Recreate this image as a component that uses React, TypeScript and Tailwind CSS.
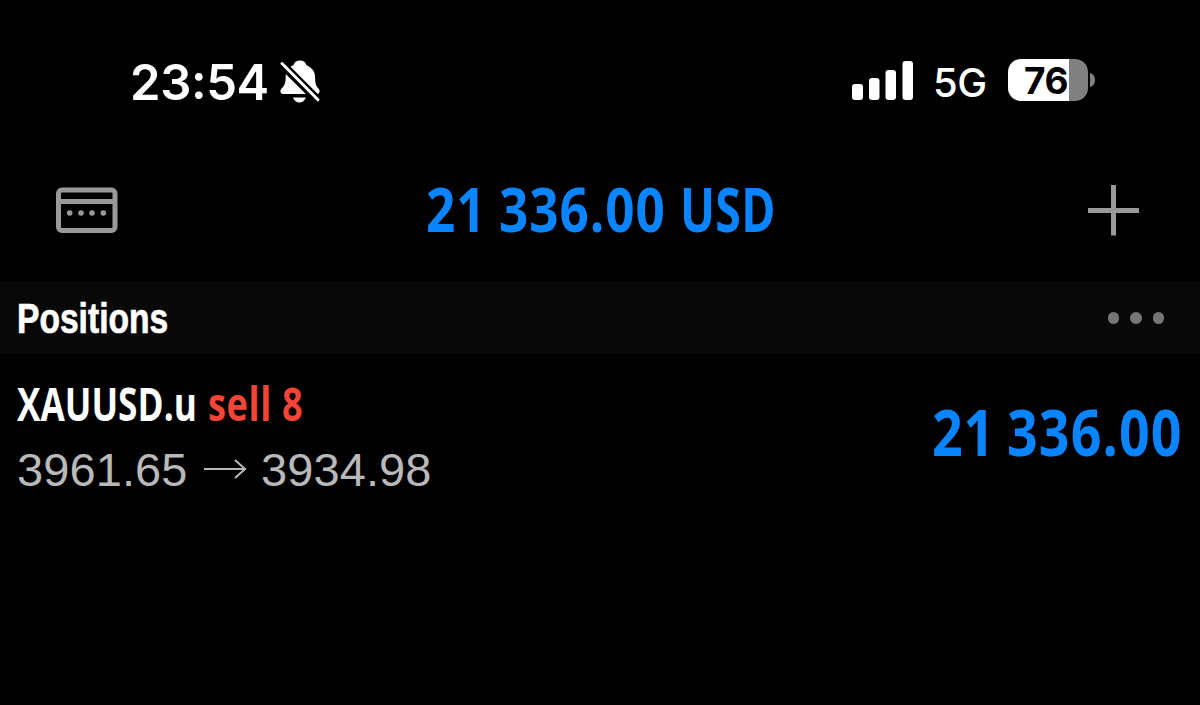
import React from 'react';
import clsx from 'clsx';

type CondensedProps = {
  children: React.ReactNode;
  box: string;
  stretch: string;
};

// Narrow display text: the box keeps the final width, the inner span is squeezed into it
function Condensed({ children, box, stretch }: CondensedProps) {
  return (
    <span className={clsx('block shrink-0', box)}>
      <span className={clsx('inline-block origin-left whitespace-pre', stretch)}>{children}</span>
    </span>
  );
}

function BellOff() {
  return (
    <svg className="ml-[11px] w-[42px] h-[44px]" viewBox="0 0 42 44" fill="none">
      <path
        d="M21 1.500c3.400 0 5.800 2 6.500 4.800 5 2 8.600 6.200 8.600 11.700 0 7 1.200 9 3.500 11.800 1.800 2.200 1 5.200-1.700 5.200H4.200c-2.900 0-3.600-3.100-1.800-5.200 2.700-3 4.300-5 4.300-11.800 0-5.500 2.300-9.700 7.700-11.700C15.100 3.500 17.500 1.500 21 1.500Z"
        fill="#fff"
      />
      <path d="M14 38.500h12.800c-1 3-3.500 5-6.400 5s-5.400-2-6.400-5Z" fill="#fff" />
      <path d="M-1 1.200 41 43.200" stroke="#000" strokeWidth="8.500" />
      <path d="M3 4.500 39 40.700" stroke="#fff" strokeWidth="3" strokeLinecap="round" />
    </svg>
  );
}

function Signal() {
  return (
    <svg className="w-[62px] h-[39px]" viewBox="0 0 62 39" fill="#fff">
      <rect x="0" y="23" width="11" height="16" rx="3" />
      <rect x="17" y="17" width="10.500" height="22" rx="3" />
      <rect x="33.500" y="9" width="10.500" height="30" rx="3" />
      <rect x="50.500" y="0" width="10.500" height="39" rx="3" />
    </svg>
  );
}

function Battery() {
  return (
    <div className="flex items-center gap-[2px] ml-[20px]">
      <div className="w-[80px] h-[42px] rounded-[13px] bg-linear-to-r from-white from-[61px] to-[#808080] to-[61px] pl-[16px] text-black text-[37px] leading-[43px] font-bold tracking-[-0.5px]">
        76
      </div>
      <svg className="w-[5px] h-[14px]" viewBox="0 0 5 14">
        <path d="M0 0c3.500 1 5 4 5 7s-1.500 6-5 7Z" fill="#808080" />
      </svg>
    </div>
  );
}

function StatusBar() {
  return (
    <div className="h-[160px] pt-[59px] pl-[130px] pr-[105px] flex items-start justify-between font-['Inter',sans-serif] text-white">
      <div className="flex items-start">
        <div className="w-[138px] pt-[1px] text-[49px] leading-[46px] font-semibold tracking-[-0.4px] whitespace-nowrap">
          23<span className="relative -top-[1px]">:</span>54
        </div>
        <BellOff />
      </div>
      <div className="flex items-center h-[42px]">
        <Signal />
        <div className="ml-[19px] w-[55px] pt-[5px] text-[40px] leading-[42px] font-medium tracking-[-0.5px]">5G</div>
        <Battery />
      </div>
    </div>
  );
}

function NavBar() {
  return (
    <div className="h-[121px] pb-[21px] pl-[56px] pr-[61px] flex items-center justify-between">
      <svg className="w-[62px] h-[46px]" viewBox="0 0 62 46">
        <rect x="2.500" y="3" width="56.500" height="40.500" rx="3.500" fill="none" stroke="#999" strokeWidth="5" />
        <path d="M3 14.500h56" stroke="#999" strokeWidth="5" />
        <g fill="#999">
          <circle cx="13.700" cy="26" r="2.800" />
          <circle cx="25" cy="26" r="2.800" />
          <circle cx="36" cy="26" r="2.800" />
          <circle cx="47.300" cy="26" r="2.800" />
        </g>
      </svg>
      <div className="-mt-[3px] mr-[7px] flex text-[61px] leading-[64px] font-bold font-['Open_Sans',sans-serif] text-[#0a84ff]">
        <Condensed box="w-[73px]" stretch="scale-x-[0.84] tracking-[1px]">21</Condensed>
        <Condensed box="w-[181px]" stretch="scale-x-[0.84] tracking-[1.1px]">336.00</Condensed>
        <Condensed box="w-[94px]" stretch="scale-x-[0.76] tracking-[0.4px]">USD</Condensed>
      </div>
      <svg className="w-[51px] h-[51px]" viewBox="0 0 51 51" stroke="#999" strokeWidth="5">
        <path d="M25.500 0v50.500M0 25.500h51" />
      </svg>
    </div>
  );
}

function SectionHeader() {
  return (
    <div className="h-[73px] bg-[#080808] pl-[17px] pr-[36px] flex items-center justify-between">
      <div className="pt-[2px] text-[42px] leading-[48px] font-bold font-['Liberation_Sans',sans-serif] text-white [-webkit-text-stroke:0.7px_white]">
        <Condensed box="w-[152px]" stretch="scale-x-[0.8]">Positions</Condensed>
      </div>
      <div className="pt-[1px] flex gap-[11px]">
        <span className="size-[11.500px] rounded-full bg-[#757575]" />
        <span className="size-[11.500px] rounded-full bg-[#757575]" />
        <span className="size-[11.500px] rounded-full bg-[#757575]" />
      </div>
    </div>
  );
}

function PositionRow() {
  return (
    <div className="pl-[17px] pr-[17px] pt-[19px] flex items-start justify-between">
      <div>
        <div className="flex text-[47px] leading-[60px] font-bold font-['Open_Sans',sans-serif] text-white">
          <Condensed box="w-[191px]" stretch="scale-x-[0.75]">XAUUSD.u</Condensed>
          <span className="text-[#f24535]">
            <Condensed box="w-[96px]" stretch="scale-x-[0.77] tracking-[0.8px]">sell 8</Condensed>
          </span>
        </div>
        <div className="mt-[9px] flex items-center text-[47px] leading-[56px] tracking-[0.1px] font-['Liberation_Sans',sans-serif] text-[#b9b9b9]">
          <span className="w-[187px]">3961.65</span>
          <svg className="-mt-[2px] w-[43px] h-[20px]" viewBox="0 0 43 20" fill="none" stroke="#b9b9b9" strokeWidth="2">
            <path d="M0 10h42M31 1l10 9-10 9" />
          </svg>
          <span className="ml-[14px]">3934.98</span>
        </div>
      </div>
      <div className="pt-[26px] flex text-[64px] leading-[66px] font-bold font-['Open_Sans',sans-serif] text-[#0a84ff]">
        <Condensed box="w-[75px]" stretch="scale-x-[0.84] tracking-[0.8px]">21</Condensed>
        <Condensed box="w-[176px]" stretch="scale-x-[0.84] tracking-[1.3px]">336.00</Condensed>
      </div>
    </div>
  );
}

export default function App() {
  return (
    <div className="w-full h-[705px] bg-black overflow-hidden">
      <StatusBar />
      <NavBar />
      <SectionHeader />
      <PositionRow />
    </div>
  );
}
